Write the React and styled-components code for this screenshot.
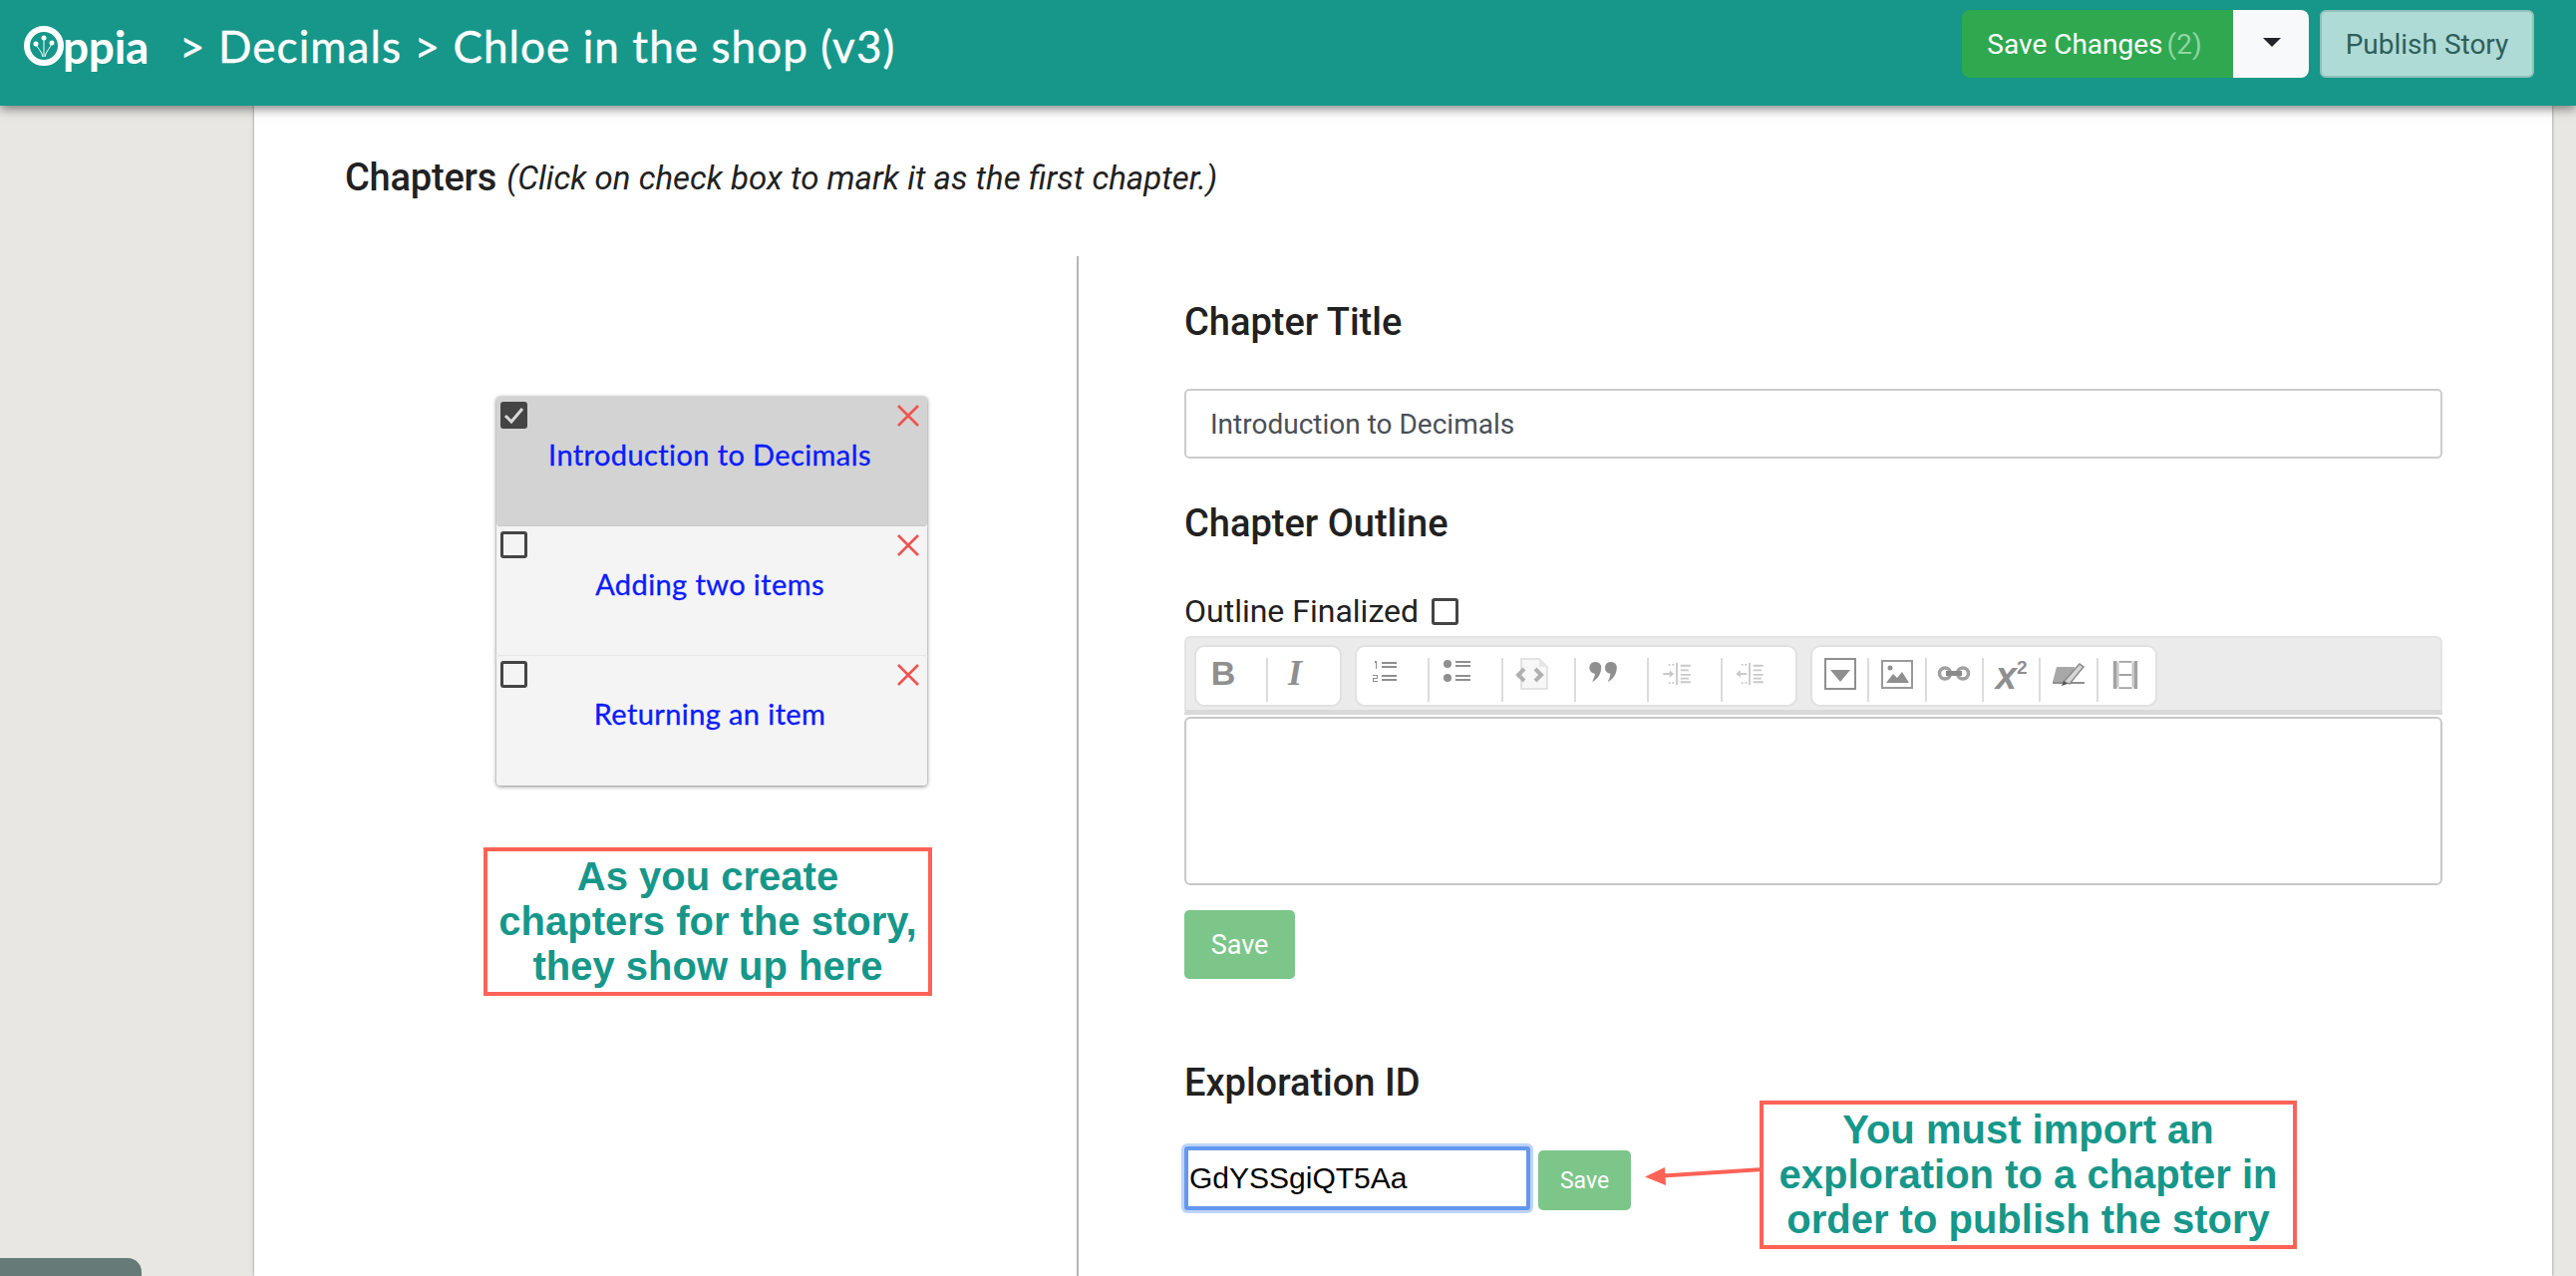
import React from "react";
import styled, { createGlobalStyle } from "styled-components";

const Global = createGlobalStyle`
  html, body { margin: 0; padding: 0; height: 1280px; overflow: hidden; background: #e8e7e3; }
  * { box-sizing: border-box; }
  body { font-family: Roboto, "Liberation Sans", sans-serif; color: #212121; }
`;

const Page = styled.div`
  position: relative;
  width: 2584px;
  height: 1280px;
  overflow: hidden;
`;

const Header = styled.header`
  position: relative;
  z-index: 2;
  height: 106px;
  background: #16978a;
  box-shadow: 0 3px 10px rgba(0, 0, 0, 0.5);
  display: flex;
  align-items: center;
  justify-content: space-between;
  padding: 0 42px 0 22px;
`;

const Brand = styled.div`
  display: flex;
  align-items: center;
  color: #fff;
  height: 100%;
`;

const LogoWord = styled.span`
  font-family: Lato, sans-serif;
  font-weight: 700;
  font-size: 46px;
  line-height: 1;
  margin-left: -3px;
  margin-top: -12px;
  letter-spacing: -0.3px;
`;

const Crumbs = styled.span`
  font-family: Lato, sans-serif;
  font-size: 44px;
  font-weight: 400;
  letter-spacing: 1.08px;
  -webkit-text-stroke: 0.4px #fff;
  margin-left: 31px;
  margin-top: -14px;
  white-space: pre;
`;

const Actions = styled.div`
  display: flex;
  align-items: stretch;
  height: 68px;
  margin-top: -18px;
`;

const SaveChanges = styled.button`
  width: 272px;
  border: 0;
  border-radius: 8px 0 0 8px;
  background: #2fa84f;
  color: #fff;
  font: 400 28px Roboto, sans-serif;
  padding: 0 6px 0 0;
`;

const Count = styled.span`
  color: #93d4a4;
  margin-left: 4px;
`;

const Caret = styled.button`
  width: 76px;
  border: 0;
  border-radius: 0 8px 8px 0;
  background: #f8f9fa;
  display: flex;
  justify-content: center;
  padding: 0;
  padding-top: 28px;
  &::after {
    content: "";
    display: block;
    width: 0;
    height: 0;
    margin-left: 2px;
    border-left: 9px solid transparent;
    border-right: 9px solid transparent;
    border-top: 9px solid #212529;
  }
`;

const Publish = styled.button`
  width: 215px;
  margin-left: 11px;
  border: 2px solid #8fc0bb;
  border-radius: 6px;
  background: #aedbd6;
  color: #2e5f5b;
  font: 400 28px Roboto, sans-serif;
  padding: 0;
`;

const Body = styled.div`
  display: flex;
  height: 1174px;
`;

const Gutter = styled.div`
  width: 255px;
  flex: none;
`;

const Sheet = styled.main`
  width: 2305px;
  flex: none;
  background: #fff;
  box-shadow: 0 0 3px rgba(0, 0, 0, 0.4);
  padding-top: 50px;
  overflow: hidden;
`;

const SectionHead = styled.div`
  margin-left: 91px;
  height: 44px;
  display: flex;
  align-items: center;
`;

const SectionTitle = styled.span`
  font-size: 38px;
  font-weight: 500;
  letter-spacing: -0.2px;
`;

const SectionHint = styled.em`
  font-size: 33px;
  margin-left: 10px;
`;

const Columns = styled.div`
  display: flex;
  margin-top: 57px;
  height: 1100px;
`;

const LeftColumn = styled.section`
  width: 825px;
  flex: none;
  padding-top: 141px;
`;

const ChapterList = styled.div`
  margin-left: 243px;
  width: 432px;
  box-shadow: 0 1px 4px rgba(0, 0, 0, 0.45);
  border-radius: 4px;
`;

const ChapterCard = styled.div`
  height: 130px;
  padding: 5px 8px 0 4px;
  background: ${(p) => (p.$active ? "#d3d3d3" : "#f4f4f4")};
  border-radius: 4px;
  box-shadow: 0 0 2px rgba(0, 0, 0, 0.18);
`;

const CardTop = styled.div`
  display: flex;
  justify-content: space-between;
  height: 27px;
`;

const Box = styled.span`
  display: block;
  width: ${(p) => p.$size || 27}px;
  height: ${(p) => p.$size || 27}px;
  border: 3px solid #444;
  border-radius: 3px;
  background: ${(p) => (p.$checked ? "#444" : "transparent")};
  flex: none;
`;

const ChapterName = styled.div`
  font-family: Lato, sans-serif;
  font-size: 29px;
  font-weight: 400;
  color: #0a1cff;
  -webkit-text-stroke: 0.35px #0a1cff;
  text-align: center;
  margin-top: 8px;
  line-height: 36px;
  letter-spacing: 0.4px;
`;

const Note = styled.div`
  border: 4px solid #ff6257;
  background: #fff;
  color: #16978a;
  font-family: "Liberation Sans", Arial, sans-serif;
  font-weight: 700;
  text-align: center;
  display: flex;
  align-items: center;
  justify-content: center;
`;

const ChaptersNote = styled(Note)`
  margin: 62px 0 0 230px;
  width: 450px;
  height: 149px;
  font-size: 40px;
  line-height: 45px;
`;

const RightColumn = styled.section`
  flex: 1;
  border-left: 2px solid #b5b5b5;
  padding: 44px 110px 0 106px;
`;

const Heading = styled.h3`
  margin: 0;
  font-size: 38px;
  font-weight: 500;
  line-height: 44px;
`;

const TitleInput = styled.input`
  display: block;
  width: 100%;
  height: 70px;
  margin: 45px 0 43px;
  border: 2px solid #ccc;
  border-radius: 5px;
  padding: 0 24px;
  font: 400 28px Roboto, sans-serif;
  color: #495057;
  background: #fff;
`;

const FinalizedLabel = styled.label`
  display: flex;
  align-items: center;
  margin-top: 49px;
  height: 34px;
  font-size: 32px;
  gap: 13px;
`;

const Toolbar = styled.div`
  margin-top: 8px;
  height: 79px;
  background: #ebebeb;
  border: 2px solid #e3e3e3;
  border-bottom: 5px solid #d9d9d9;
  border-radius: 6px 6px 0 0;
  display: flex;
  padding: 7px 0 0 8px;
  gap: 13px;
`;

const Group = styled.div`
  height: 62px;
  background: #fff;
  border: 2px solid #e1e1e1;
  border-radius: 10px;
  display: flex;
  padding: 11px 0 0;
`;

const Tool = styled.div`
  width: ${(p) => p.$w}px;
  height: 44px;
  display: flex;
  justify-content: center;
  padding-right: ${(p) => p.$shift || 0}px;
  padding-top: ${(p) => p.$top || 0}px;
  color: #8f8f8f;
  border-right: 2px solid ${(p) => (p.$last ? "transparent" : "#dcdcdc")};
`;

const BoldMark = styled.span`
  font: 900 34px/28px "Liberation Sans", sans-serif;
  color: #8f8f8f;
`;

const ItalicMark = styled.span`
  font: italic 700 36px/28px "Liberation Serif", serif;
  color: #8f8f8f;
`;

const PowerMark = styled.span`
  font: italic 700 38px/36px "Liberation Sans", sans-serif;
  color: #8f8f8f;
  white-space: nowrap;
`;

const PowerDigit = styled.span`
  font: 700 19px/19px "Liberation Sans", sans-serif;
  vertical-align: 15px;
`;

const Editor = styled.div`
  margin-top: 2px;
  height: 169px;
  border: 2px solid #c8c8c8;
  border-radius: 6px;
  background: #fff;
`;

const SaveButton = styled.button`
  display: block;
  width: 111px;
  height: 69px;
  margin: 25px 0 82px;
  border: 0;
  border-radius: 5px;
  background: #7cc68a;
  color: #fff;
  font: 400 27px Roboto, sans-serif;
  padding: 0;
`;

const ExplorationBlock = styled.div`
  display: flex;
  align-items: flex-start;
`;

const ExplorationStack = styled.div`
  flex: none;
  width: 448px;
`;

const IdRow = styled.div`
  display: flex;
  align-items: flex-end;
  margin-top: 42px;
  gap: 8px;
`;

const IdInput = styled.input`
  width: 347px;
  height: 64px;
  border: 4px solid #6398ee;
  border-radius: 3px;
  box-shadow: 0 0 0 3px #bdd4f8;
  padding: 0 1px;
  font: 400 30px "Liberation Sans", Arial, sans-serif;
  color: #000;
  background: #fff;
`;

const SmallSave = styled.button`
  width: 93px;
  height: 60px;
  border: 0;
  border-radius: 5px;
  background: #7cc68a;
  color: #fff;
  font: 400 23px Roboto, sans-serif;
  padding: 0;
`;

const Pointer = styled.svg`
  flex: none;
  margin: 104px 0 0 14px;
`;

const IdNote = styled(Note)`
  margin-top: 40px;
  margin-left: -4px;
  width: 539px;
  height: 149px;
  font-size: 40px;
  line-height: 45px;
`;

const DockTab = styled.div`
  position: absolute;
  left: 0;
  bottom: 0;
  width: 142px;
  height: 18px;
  background: #667a77;
  border-top-right-radius: 14px;
`;

const LogoMark = () => (
  <svg width="44" height="44" viewBox="0 0 44 44" style={{ marginTop: -15 }}>
    <circle cx="22" cy="22" r="17" fill="none" stroke="#fff" strokeWidth="6" />
    <g fill="#fff">
      <circle cx="14" cy="20" r="2.500" />
      <circle cx="22" cy="14" r="2.500" />
      <circle cx="30" cy="19" r="2.500" />
    </g>
    <path d="M21 33C20 27 15 24 14 20M22 33V14M23 33C24 27 29 24 30 19" stroke="#fff" strokeWidth="1" fill="none" />
  </svg>
);

const Tick = () => (
  <svg width="21" height="21" viewBox="0 0 21 21" style={{ display: "block" }}>
    <path d="M2 11l6 6L19 4" fill="none" stroke="#d8d8d8" strokeWidth="3" />
  </svg>
);

const Cross = () => (
  <svg width="22" height="22" viewBox="0 0 22 22" style={{ marginTop: 3 }}>
    <path d="M1 1l20 20M21 1L1 21" stroke="#ef5350" strokeWidth="2.6" fill="none" />
  </svg>
);

const Numbered = () => (
  <svg width="26" height="24" viewBox="0 0 26 24" fill="#8f8f8f">
    <path d="M3 1h2v8H4V3H3zM1 15h5v4H2v2h4v1H1v-4h4v-2H1z" />
    <path d="M10 2h15v2H10zM10 6h15v2H10zM10 15h15v2H10zM10 19h15v2H10z" />
  </svg>
);

const Bulleted = () => (
  <svg width="28" height="24" viewBox="0 0 28 24" fill="#8f8f8f">
    <circle cx="4" cy="4" r="4" />
    <circle cx="4" cy="18" r="4" />
    <path d="M12 1h15v2H12zM12 5h15v2H12zM12 15h15v2H12zM12 19h15v2H12z" />
  </svg>
);

const SourceDoc = () => (
  <svg width="34" height="32" viewBox="0 0 34 32">
    <path d="M6 1h18l8 8v22H6z" fill="#f7f7f7" stroke="#dcdcdc" strokeWidth="1.5" />
    <path d="M24 1v8h8" fill="#e6e6e6" />
    <path d="M9 11l-6 6 6 6M20 11l6 6-6 6" fill="none" stroke="#b0b0b0" strokeWidth="4" />
  </svg>
);

const Quote = () => (
  <svg width="32" height="22" viewBox="0 0 32 24" fill="#8f8f8f">
    <path d="M7 1a6 6 0 0 1 6 6c0 7-4 13-10 16 2-4 3-7 3-9A6.500 6.500 0 0 1 7 1zM24 1a6 6 0 0 1 6 6c0 7-4 13-10 16 2-4 3-7 3-9A6.500 6.500 0 0 1 24 1z" />
  </svg>
);

const Indent = ({ flip }) => (
  <svg width="30" height="22" viewBox="0 0 30 24" fill="#c9c9c9">
    <path d="M14 0h2v24h-2zM19 2h11v2H19zM19 7h9v2h-9zM19 12h11v2H19zM19 16h9v2h-9zM19 20h11v2H19zM6 1h2v2H6zM10 1h2v2h-2zM6 21h2v2H6zM10 21h2v2h-2z" />
    {flip ? <path d="M0 12l5-4v3h7v2H5v3z" /> : <path d="M12 12l-5-4v3H0v2h7v3z" />}
  </svg>
);

const Collapsible = () => (
  <svg width="32" height="32" viewBox="0 0 32 32">
    <rect x="1" y="1" width="30" height="30" fill="#fff" stroke="#8f8f8f" strokeWidth="2" />
    <path d="M6 12h20L16 24z" fill="#8f8f8f" />
  </svg>
);

const Picture = () => (
  <svg width="32" height="30" viewBox="0 0 32 30">
    <rect x="1" y="1" width="30" height="27" fill="#fff" stroke="#9a9a9a" strokeWidth="2" />
    <circle cx="9" cy="8" r="2.500" fill="#8f8f8f" />
    <path d="M5 23l7-9 4 4 5-6 7 11z" fill="#8f8f8f" />
  </svg>
);

const Chain = () => (
  <svg width="34" height="15" viewBox="0 0 34 15" fill="none" stroke="#a0a0a0">
    <circle cx="8" cy="7.500" r="5.500" strokeWidth="3.500" />
    <circle cx="26" cy="7.500" r="5.500" strokeWidth="3.500" />
    <path d="M9 7.500h16" strokeWidth="5" stroke="#8a8a8a" />
  </svg>
);

const Skill = () => (
  <svg width="34" height="26" viewBox="0 0 34 26">
    <path d="M5 6h18l-2 15H1z" fill="#a8a8a8" />
    <path d="M1 21h32v2H1z" fill="#8f8f8f" />
    <path d="M12 21L28 3l4 3-14 17z" fill="#d6d6d6" stroke="#8a8a8a" strokeWidth="1.5" />
    <path d="M10 25l2-5 4 3z" fill="#555" />
  </svg>
);

const Film = () => (
  <svg width="26" height="30" viewBox="0 0 26 32" fill="#a3a3a3">
    <path d="M0 1h4v30H0zM22 1h4v30h-4zM6 1h14v2H6zM6 15h14v2H6zM6 29h14v2H6z" />
    <path d="M4 3h2v26H4zM20 3h2v26h-2z" fill="#c5c5c5" />
  </svg>
);

const chapters = [
  { name: "Introduction to Decimals", active: true },
  { name: "Adding two items" },
  { name: "Returning an item" },
];

const G2 = 73.33;
const G3 = 57.33;

export default function App() {
  return (
    <Page>
      <Global />
      <Header>
        <Brand>
          <LogoMark />
          <LogoWord>ppia</LogoWord>
          <Crumbs>{"> Decimals > Chloe in the shop (v3)"}</Crumbs>
        </Brand>
        <Actions>
          <SaveChanges>
            Save Changes<Count>(2)</Count>
          </SaveChanges>
          <Caret aria-label="More" />
          <Publish>Publish Story</Publish>
        </Actions>
      </Header>
      <Body>
        <Gutter />
        <Sheet>
          <SectionHead>
            <SectionTitle>Chapters</SectionTitle>
            <SectionHint>(Click on check box to mark it as the first chapter.)</SectionHint>
          </SectionHead>
          <Columns>
            <LeftColumn>
              <ChapterList>
                {chapters.map((c) => (
                  <ChapterCard key={c.name} $active={c.active}>
                    <CardTop>
                      <Box $checked={c.active}>{c.active && <Tick />}</Box>
                      <Cross />
                    </CardTop>
                    <ChapterName>{c.name}</ChapterName>
                  </ChapterCard>
                ))}
              </ChapterList>
              <ChaptersNote>
                As you create
                <br />
                chapters for the story,
                <br />
                they show up here
              </ChaptersNote>
            </LeftColumn>
            <RightColumn>
              <Heading>Chapter Title</Heading>
              <TitleInput readOnly value="Introduction to Decimals" />
              <Heading>Chapter Outline</Heading>
              <FinalizedLabel>
                Outline Finalized
                <Box $size={27} />
              </FinalizedLabel>
              <Toolbar>
                <Group>
                  <Tool $w={72} $shift={16} $top={1}><BoldMark>B</BoldMark></Tool>
                  <Tool $w={72} $shift={16} $top={1} $last><ItalicMark>I</ItalicMark></Tool>
                </Group>
                <Group>
                  <Tool $w={G2} $shift={16} $top={2}><Numbered /></Tool>
                  <Tool $w={G2} $shift={16} $top={2}><Bulleted /></Tool>
                  <Tool $w={G2} $shift={12}><SourceDoc /></Tool>
                  <Tool $w={G2} $shift={16} $top={3}><Quote /></Tool>
                  <Tool $w={G2} $shift={16} $top={5}><Indent /></Tool>
                  <Tool $w={G2} $shift={16} $top={5} $last><Indent flip /></Tool>
                </Group>
                <Group>
                  <Tool $w={G3}><Collapsible /></Tool>
                  <Tool $w={G3} $top={2}><Picture /></Tool>
                  <Tool $w={G3} $top={8}><Chain /></Tool>
                  <Tool $w={G3}><PowerMark>x<PowerDigit>2</PowerDigit></PowerMark></Tool>
                  <Tool $w={G3} $top={3}><Skill /></Tool>
                  <Tool $w={G3} $top={2} $last><Film /></Tool>
                </Group>
              </Toolbar>
              <Editor />
              <SaveButton>Save</SaveButton>
              <ExplorationBlock>
                <ExplorationStack>
                  <Heading>Exploration ID</Heading>
                  <IdRow>
                    <IdInput readOnly value="GdYSSgiQT5Aa" />
                    <SmallSave>Save</SmallSave>
                  </IdRow>
                </ExplorationStack>
                <Pointer width="119" height="22" viewBox="0 0 119 22">
                  <path d="M18 11.500L119 5" stroke="#ff6257" strokeWidth="4" fill="none" />
                  <path d="M0 12.500L20 3l1 18z" fill="#ff6257" />
                </Pointer>
                <IdNote>
                  You must import an
                  <br />
                  exploration to a chapter in
                  <br />
                  order to publish the story
                </IdNote>
              </ExplorationBlock>
            </RightColumn>
          </Columns>
        </Sheet>
      </Body>
      <DockTab />
    </Page>
  );
}
